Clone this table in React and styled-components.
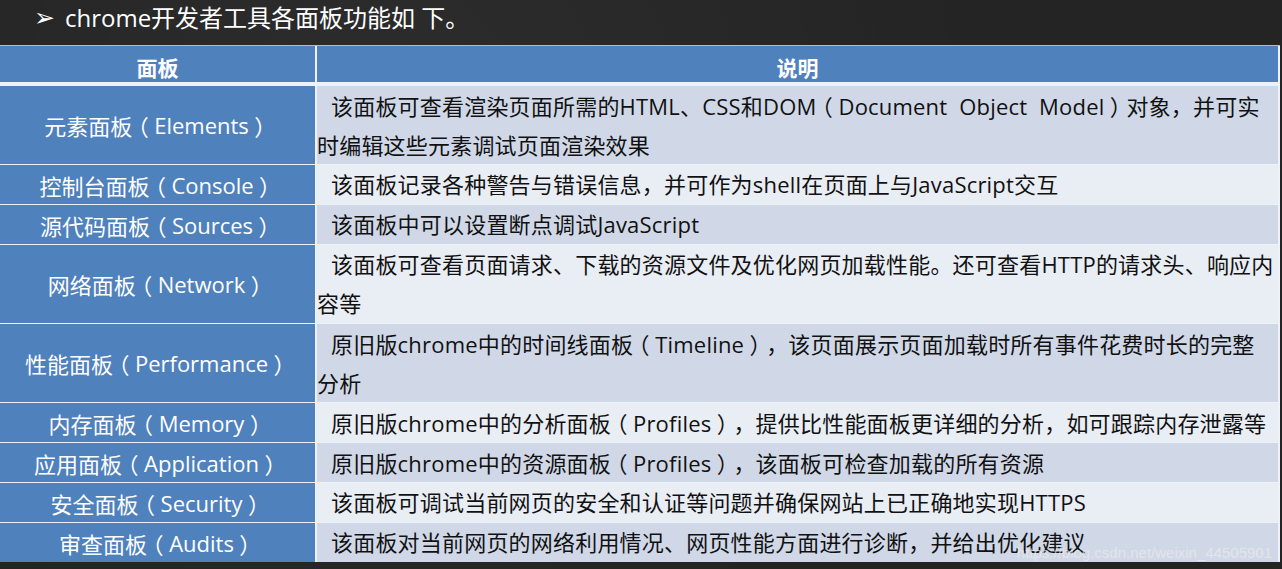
import React from 'react';
import styled, { createGlobalStyle } from 'styled-components';

const GlobalStyle = createGlobalStyle`
  html, body {
    margin: 0;
    padding: 0;
    background: #252525;
  }
  body {
    font-family: "Open Sans", "Noto Sans CJK SC", sans-serif;
  }
`;

const rows = [
  { name: '元素面板（Elements）', lines: ['该面板可查看渲染页面所需的HTML、CSS和DOM（Document  Object  Model）对象，并可实', '时编辑这些元素调试页面渲染效果'] },
  { name: '控制台面板（Console）', lines: ['该面板记录各种警告与错误信息，并可作为shell在页面上与JavaScript交互'] },
  { name: '源代码面板（Sources）', lines: ['该面板中可以设置断点调试JavaScript'] },
  { name: '网络面板（Network）', lines: ['该面板可查看页面请求、下载的资源文件及优化网页加载性能。还可查看HTTP的请求头、响应内', '容等'] },
  { name: '性能面板（Performance）', lines: ['原旧版chrome中的时间线面板（Timeline），该页面展示页面加载时所有事件花费时长的完整', '分析'] },
  { name: '内存面板（Memory）', lines: ['原旧版chrome中的分析面板（Profiles），提供比性能面板更详细的分析，如可跟踪内存泄露等'] },
  { name: '应用面板（Application）', lines: ['原旧版chrome中的资源面板（Profiles），该面板可检查加载的所有资源'] },
  { name: '安全面板（Security）', lines: ['该面板可调试当前网页的安全和认证等问题并确保网站上已正确地实现HTTPS'] },
  { name: '审查面板（Audits）', lines: ['该面板对当前网页的网络利用情况、网页性能方面进行诊断，并给出优化建议'] },
];

const Page = styled.div`
  position: relative;
  width: 1282px;
  height: 569px;
  overflow: hidden;
  background:
    radial-gradient(circle at 30% 20%, rgba(255, 255, 255, 0.04), transparent 60%),
    #242424;
`;

const Title = styled.h1`
  margin: 0;
  height: 45px;
  display: flex;
  align-items: center;
  gap: 10px;
  padding-left: 34px;
  padding-bottom: 10px;
  box-sizing: border-box;
  font-size: 24px;
  font-weight: 400;
  color: #fff;
  line-height: 1;
`;

const Bullet = styled.span`
  font-size: 25px;
  font-family: "DejaVu Sans", sans-serif;
`;

const Table = styled.div`
  display: grid;
  grid-template-columns: 315px 961px;
  column-gap: 2px;
  row-gap: 1px;
  width: 1280px;
  padding-right: 2px;
  box-sizing: border-box;
  background: #eef1f7;
  border-top: 1px solid #b8bcc4;
`;

const HeadCell = styled.div`
  height: 36px;
  padding-top: 5px;
  box-sizing: border-box;
  margin-bottom: 3px;
  background: #4f81bd;
  color: #fff;
  font-family: "Noto Sans CJK SC", sans-serif;
  font-weight: 700;
  font-size: 21px;
  display: flex;
  align-items: center;
  justify-content: center;
`;

const NameCell = styled.div`
  height: ${({ $lines }) => $lines * 39}px;
  background: #4f81bd;
  color: #fff;
  font-size: 22px;
  display: flex;
  align-items: center;
  justify-content: center;
  white-space: nowrap;
`;

const DescCell = styled.div`
  height: ${({ $lines }) => $lines * 39}px;
  background: ${({ $odd }) => ($odd ? '#d0d8e8' : '#e9edf4')};
  color: #111;
  font-size: 22px;
  letter-spacing: 0.2px;
  line-height: 39px;
  white-space: pre;
  overflow: hidden;
`;

const Line = styled.div`
  padding-left: ${({ $first }) => ($first ? '14px' : '0')};
`;

// fullwidth brackets sit centred in a full em box in the reference font
const Paren = styled.span`
  display: inline-block;
  width: 1em;
  text-align: center;
  font-family: "Noto Sans CJK SC", sans-serif;
  font-feature-settings: "halt" 1;
`;

const Watermark = styled.div`
  position: absolute;
  right: 10px;
  bottom: 8px;
  font-family: "Liberation Sans", Arial, sans-serif;
  font-size: 15px;
  color: rgba(235, 235, 235, 0.7);
`;

const withParens = (text) =>
  text.split(/([（）])/).map((part, i) =>
    part === '（' || part === '）' ? <Paren key={i}>{part}</Paren> : part
  );

export default function App() {
  return (
    <Page>
      <GlobalStyle />
      <Title>
        <Bullet>➢</Bullet>
        <span>chrome开发者工具各面板功能如 下。</span>
      </Title>
      <Table>
        <HeadCell>面板</HeadCell>
        <HeadCell>说明</HeadCell>
        {rows.map((row, i) => (
          <React.Fragment key={row.name}>
            <NameCell $lines={row.lines.length}>{withParens(row.name)}</NameCell>
            <DescCell $lines={row.lines.length} $odd={i % 2 === 0}>
              {row.lines.map((text, j) => (
                <Line key={j} $first={j === 0}>{withParens(text)}</Line>
              ))}
            </DescCell>
          </React.Fragment>
        ))}
      </Table>
      <Watermark>https://blog.csdn.net/weixin_44505901</Watermark>
    </Page>
  );
}
